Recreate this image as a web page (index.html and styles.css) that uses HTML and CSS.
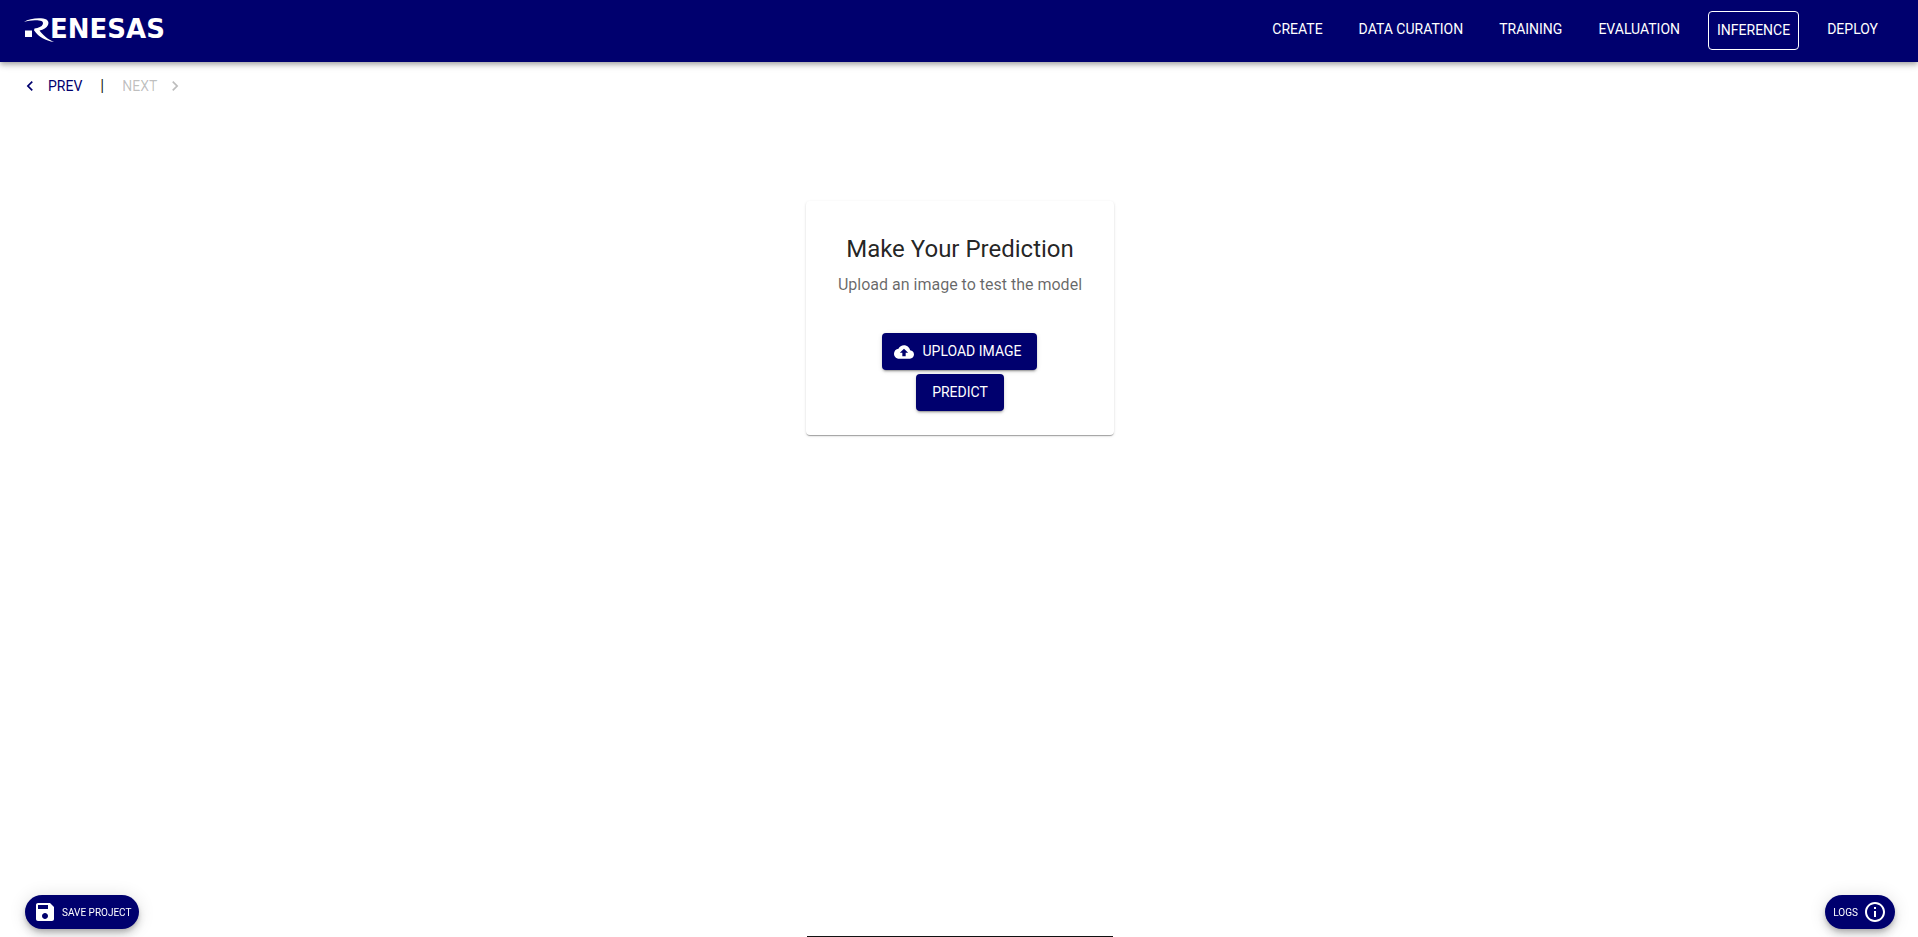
FILE: index.html
```html
<!DOCTYPE html>
<html lang="en">
<head>
<meta charset="utf-8">
<meta name="viewport" content="width=device-width, initial-scale=1">
<title>Inference</title>
<link rel="stylesheet" href="styles.css">
</head>
<body>
<header class="topbar">
  <a class="brand" href="#" aria-label="Renesas">
    <svg class="brand-logo" viewBox="0 0 152 26" aria-hidden="true">
      <rect x="1" y="12.500" width="7" height="6.500"/>
      <path d="M0 4C4 1 11 0 17 .3C23.500 .7 25.500 3.500 24 7C22.700 10 19.500 11.800 15.500 12.600C19 17 23 21 30 24C21.500 22.500 15 19.300 10 12.200L10.500 10.500C14.500 10 17.800 8.800 18.800 6.300C20 3 16 2.200 11 2.300C7 2.400 3.500 3 0 4Z"/>
      <text class="brand-text" x="26" y="19.500">ENESAS</text>
    </svg>
  </a>
  <nav class="nav">
    <a class="nav-link" href="#">CREATE</a>
    <a class="nav-link" href="#">DATA CURATION</a>
    <a class="nav-link" href="#">TRAINING</a>
    <a class="nav-link" href="#">EVALUATION</a>
    <a class="nav-link nav-link-active" href="#" aria-current="page">INFERENCE</a>
    <a class="nav-link" href="#">DEPLOY</a>
  </nav>
</header>
<div class="pager">
  <button class="pager-button" type="button">
    <svg class="pager-icon" viewBox="0 0 24 24" aria-hidden="true"><path d="M15.410 7.410 14 6l-6 6 6 6 1.410-1.410L10.830 12z"/></svg>
    PREV
  </button>
  <span class="pager-divider">|</span>
  <button class="pager-button" type="button" disabled>
    NEXT
    <svg class="pager-icon" viewBox="0 0 24 24" aria-hidden="true"><path d="M10 6 8.590 7.410 13.170 12l-4.580 4.590L10 18l6-6z"/></svg>
  </button>
</div>
<main class="content">
  <section class="card">
    <h1 class="card-title">Make Your Prediction</h1>
    <p class="card-text">Upload an image to test the model</p>
    <div class="card-actions">
      <button class="button button-with-icon" type="button">
        <svg class="button-icon" viewBox="0 0 24 24" aria-hidden="true"><path d="M19.350 10.040C18.670 6.590 15.640 4 12 4 9.110 4 6.600 5.640 5.350 8.040 2.340 8.360 0 10.910 0 14c0 3.310 2.690 6 6 6h13c2.760 0 5-2.240 5-5 0-2.640-2.050-4.780-4.650-4.960zM14 13v4h-4v-4H7l5-5 5 5h-3z"/></svg>
        UPLOAD IMAGE
      </button>
      <button class="button" type="button">PREDICT</button>
    </div>
  </section>
  <div class="preview"></div>
</main>
<button class="fab fab-save" type="button">
  <svg class="fab-icon" viewBox="0 0 24 24" aria-hidden="true"><path d="M17 3H5c-1.110 0-2 .9-2 2v14c0 1.100.89 2 2 2h14c1.100 0 2-.9 2-2V7l-4-4zm-5 16c-1.660 0-3-1.340-3-3s1.340-3 3-3 3 1.340 3 3-1.340 3-3 3zm3-10H5V5h10v4z"/></svg>
  SAVE PROJECT
</button>
<button class="fab fab-logs" type="button">
  LOGS
  <svg class="fab-icon" viewBox="0 0 24 24" aria-hidden="true"><path d="M11 7h2v2h-2zm0 4h2v6h-2zm1-9C6.480 2 2 6.480 2 12s4.480 10 10 10 10-4.480 10-10S17.520 2 12 2zm0 18c-4.410 0-8-3.590-8-8s3.590-8 8-8 8 3.590 8 8-3.590 8-8 8z"/></svg>
</button>
</body>
</html>
```

FILE: styles.css
```css
:root {
  --navy: #00006e;
}

* {
  box-sizing: border-box;
}

body {
  display: flex;
  flex-direction: column;
  height: 100vh;
  margin: 0;
  overflow: hidden;
  background: #fff;
  color: rgba(0, 0, 0, 0.87);
  font-family: Roboto, "Liberation Sans", sans-serif;
  font-size: 14px;
}

button {
  border: 0;
  font: inherit;
  cursor: pointer;
}

svg {
  fill: currentColor;
  flex: none;
}

.topbar {
  display: flex;
  justify-content: space-between;
  align-items: flex-start;
  flex: none;
  height: 62px;
  padding: 11px 32px 0 24px;
  background: var(--navy);
  color: #fff;
  box-shadow: 0 2px 4px -1px rgba(0, 0, 0, 0.2), 0 4px 5px rgba(0, 0, 0, 0.14), 0 1px 10px rgba(0, 0, 0, 0.12);
}

.brand {
  display: flex;
  padding-top: 7px;
  color: #fff;
}

.brand-logo {
  width: 152px;
  height: 26px;
  overflow: visible;
}

.brand-text {
  font-family: "DejaVu Sans", sans-serif;
  font-size: 26px;
  font-weight: 700;
}

.nav {
  display: flex;
  align-items: flex-start;
  gap: 20px;
}

.nav-link {
  padding: 8px;
  border-radius: 4px;
  color: #fff;
  line-height: 21px;
  text-decoration: none;
}

.nav-link-active {
  border: 1px solid #fff;
}

.pager {
  display: flex;
  align-items: center;
  gap: 10px;
  padding: 12px 20px;
  line-height: 24px;
}

.pager-button {
  display: flex;
  align-items: center;
  gap: 8px;
  padding: 0 8px 0 0;
  background: none;
  color: var(--navy);
}

.pager-button:disabled {
  padding: 0 0 0 8px;
  color: rgba(0, 0, 0, 0.26);
  cursor: default;
}

.pager-icon {
  width: 20px;
  height: 20px;
}

.pager-divider {
  font-size: 16px;
}

.content {
  display: flex;
  flex: 1;
  flex-direction: column;
  align-items: center;
  justify-content: space-between;
  padding: 91px 0 0 2px;
}

.card {
  padding: 32px 32px 24px;
  border-radius: 4px;
  background: #fff;
  text-align: center;
  box-shadow: 0 2px 1px -1px rgba(0, 0, 0, 0.2), 0 1px 1px rgba(0, 0, 0, 0.14), 0 1px 3px rgba(0, 0, 0, 0.12);
}

.card-title {
  margin: 0 0 8px;
  font-size: 24px;
  font-weight: 400;
  line-height: 32px;
}

.card-text {
  margin: 0;
  color: rgba(0, 0, 0, 0.6);
  font-size: 16px;
  line-height: 24px;
}

.card-actions {
  display: flex;
  flex-direction: column;
  align-items: center;
  gap: 4px;
  margin-top: 36px;
}

.button {
  display: flex;
  align-items: center;
  gap: 8px;
  padding: 6px 16px;
  border-radius: 4px;
  background: var(--navy);
  color: #fff;
  line-height: 25px;
  box-shadow: 0 3px 1px -2px rgba(0, 0, 0, 0.2), 0 2px 2px rgba(0, 0, 0, 0.14), 0 1px 5px rgba(0, 0, 0, 0.12);
}

.button-with-icon {
  padding-left: 12px;
}

.button-icon {
  width: 20px;
  height: 20px;
}

.preview {
  width: 306px;
  border-top: 1px solid #111;
}

.fab {
  position: fixed;
  bottom: 8px;
  display: flex;
  align-items: center;
  gap: 5px;
  height: 34px;
  padding: 0 8px;
  border-radius: 17px;
  background: var(--navy);
  color: #fff;
  font-size: 10px;
  box-shadow: 0 3px 5px -1px rgba(0, 0, 0, 0.2), 0 6px 10px rgba(0, 0, 0, 0.14), 0 1px 18px rgba(0, 0, 0, 0.12);
}

.fab-save {
  left: 25px;
}

.fab-logs {
  right: 23px;
}

.fab-icon {
  width: 24px;
  height: 24px;
}
```
